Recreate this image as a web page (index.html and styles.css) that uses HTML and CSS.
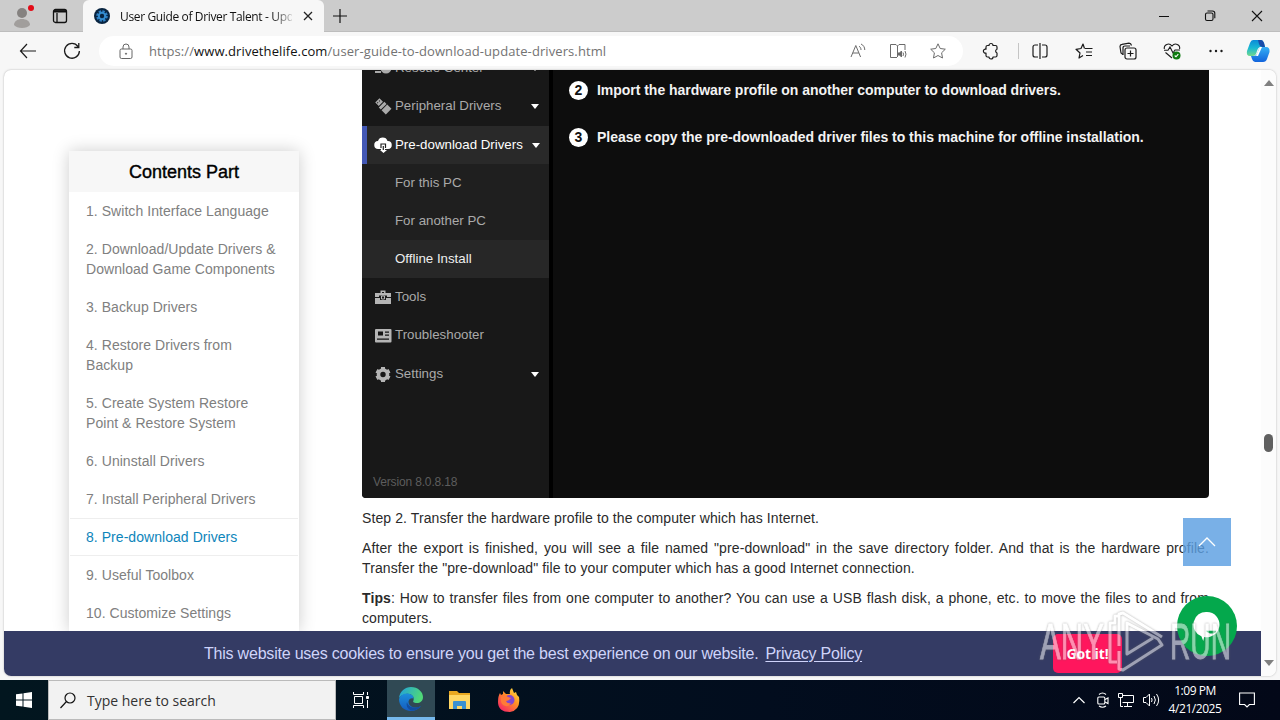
FILE: index.html
```html
<!DOCTYPE html>
<html lang="en">
<head>
<meta charset="UTF-8" />
<meta name="viewport" content="width=device-width, initial-scale=1" />
<title>User Guide of Driver Talent</title>
<link rel="stylesheet" href="styles.css">
</head>
<body>

<header class="tabbar">
  <svg class="profile" width="24" height="28" viewBox="0 0 24 28"><circle cx="12" cy="11" r="5" fill="#858280"/><path d="M4 23c0-8 16-8 16 0-3 4-13 4-16 0z" fill="#a19e9c"/><circle cx="21" cy="6" r="3" fill="#e30b17"/></svg>
  <svg class="tabs-icon" width="16" height="16" viewBox="0 0 16 16" fill="none" stroke="#111" stroke-width="1.3"><rect x="1.500" y="1.500" width="13" height="13" rx="2"/><path d="M2 3.300h12" stroke-width="2.400"/><path d="M5 5v9"/></svg>
  <div class="tab">
    <svg width="16" height="16" viewBox="0 0 16 16"><circle cx="8" cy="8" r="8" fill="#092541"/><circle cx="8" cy="8" r="4.5" fill="none" stroke="#2d7fc4" stroke-width="2.600" stroke-dasharray="2.300 1.200"/><circle cx="8" cy="8" r="3.200" fill="none" stroke="#348ccf" stroke-width="2"/></svg>
    <span class="tab-title">User Guide of Driver Talent - Upd</span>
    <svg width="10" height="10" viewBox="0 0 10 10" stroke="#222" stroke-width="1.300"><path d="M1 1l8 8M9 1L1 9"/></svg>
  </div>
  <svg class="newtab" width="14" height="14" viewBox="0 0 14 14" stroke="#111" stroke-width="1.200"><path d="M7 0v14M0 7h14"/></svg>
  <div class="window-buttons">
    <svg width="10" height="12" viewBox="0 0 10 12" stroke="#111"><path d="M0 6.500h10"/></svg>
    <svg width="12" height="12" viewBox="0 0 12 12" fill="none" stroke="#111" stroke-width="1.100"><rect x="1.500" y="3" width="7.500" height="7.500" rx="1.500"/><path d="M3.500 1h5q2.300 0 2.300 2.300v5"/></svg>
    <svg width="12" height="12" viewBox="0 0 12 12" stroke="#111" stroke-width="1.100"><path d="M1 1l10 10M11 1L1 11"/></svg>
  </div>
</header>

<nav class="toolbar">
  <svg class="back" width="18" height="16" viewBox="0 0 18 16" fill="none" stroke="#1b1b1b" stroke-width="1.200"><path d="M17 8H1.500M8 1L1.500 8 8 15"/></svg>
  <svg class="reload" width="18" height="18" viewBox="0 0 18 18" fill="none" stroke="#1b1b1b" stroke-width="1.300"><path d="M15 4.500A7.400 7.400 0 1 0 16.400 9M15.800 1v4.500h-4.500"/></svg>
  <div class="address">
    <svg class="lock" width="14" height="17" viewBox="0 0 14 17" fill="none" stroke="#666"><rect x="1" y="6" width="12" height="9.500" rx="1.500"/><path d="M4 6V4a3 3 0 0 1 6 0v2"/><circle cx="7" cy="10.700" r=".6" fill="#666"/></svg>
    <span class="url">https://<b>www.drivethelife.com</b>/user-guide-to-download-update-drivers.html</span>
    <svg width="16" height="16" viewBox="0 0 16 16" fill="none" stroke="#6b6b6b"><path d="M1 14L5.800 2.500 10.600 14M2.800 10h6M9 3.200c1.400.8 2 2 2 3.800M11 1c2.600 1.300 3.700 3.200 3.800 6"/></svg>
    <svg width="18" height="16" viewBox="0 0 18 16" fill="none" stroke="#6b6b6b"><path d="M8 14.500H1.500v-13H7L8.500 3 10 1.500h6V7M8.500 3v11"/><path d="M9 10h1.500l2-2v6l-2-2H9z" fill="#666"/><path d="M14 9.500q1 1.500 0 3.500M16 8q2 3 0 6.500"/></svg>
    <svg width="16" height="16" viewBox="0 0 16 16" fill="none" stroke="#6b6b6b" stroke-linejoin="round"><path d="M8 .8l2.200 4.700 5.100.7-3.700 3.600.9 5.200L8 12.500 3.500 15l.9-5.200L.7 6.200l5.100-.7z"/></svg>
  </div>
  <div class="tools">
    <svg width="18" height="18" viewBox="0 0 18 18" fill="none" stroke="#1b1b1b" stroke-width="1.200" stroke-linejoin="round"><path d="M5.500 3.500H7a2 2 0 0 1 4 0h2.500q1.500 0 1.500 1.500v2.200a2 2 0 0 0 0 3.800v2.500q0 1.500-1.500 1.500H11a2 2 0 0 1-4 0H5.500Q4 15 4 13.500V11a2 2 0 1 1 0-3.800V5q0-1.500 1.500-1.500z"/></svg>
    <i class="divider"></i>
    <svg width="18" height="18" viewBox="0 0 18 18" fill="none" stroke="#1b1b1b" stroke-width="1.200"><path d="M7 3H4a2 2 0 0 0-2 2v8q0 2 2 2h3M11 3h3a2 2 0 0 1 2 2v8q0 2-2 2h-3M9 1v16"/></svg>
    <svg width="18" height="18" viewBox="0 0 18 18" fill="none" stroke="#1b1b1b" stroke-width="1.200" stroke-linejoin="round"><path d="M9.500 6.500L8 2 6 6.500l-5 .8L5 11l-1 5 4-2.500M10 6.500h7.500M11 10h6M11 13.500h6"/></svg>
    <svg width="18" height="18" viewBox="0 0 18 18" fill="none" stroke="#1b1b1b" stroke-width="1.200"><path d="M4 12.500L2 11 1 4.500Q1 2.600 3 2.400L10 1.200q2 0 2.500 2.300"/><path d="M4 13V6q0-2 2-2h5"/><rect x="6" y="6" width="11" height="11" rx="2"/><path d="M11.500 8.500v6M8.500 11.500h6"/></svg>
    <svg width="18" height="18" viewBox="0 0 18 18" fill="none" stroke="#1b1b1b" stroke-width="1.100"><path d="M1.300 7C.6 2.500 6 .2 9 4c3-3.800 8.500-1.500 7.600 3M2.500 10.500L9 16M1 8.300h4L7 5l3 6 2-3h5"/><circle cx="13.500" cy="13.500" r="4" fill="#0f7b10" stroke="none"/><path d="M11.700 13.500l1.300 1.300 2.300-2.600" stroke="#fff"/></svg>
    <svg width="18" height="18" viewBox="0 0 18 18" fill="#1b1b1b"><circle cx="3.500" cy="9" r="1.200"/><circle cx="9" cy="9" r="1.200"/><circle cx="14.500" cy="9" r="1.200"/></svg>
  </div>
  <svg class="copilot" width="24" height="24" viewBox="0 0 24 24">
    <defs>
      <linearGradient id="cpA" x1="0" y1="0" x2="0" y2="1"><stop offset="0" stop-color="#0b8ad8"/><stop offset=".5" stop-color="#19b8d3"/><stop offset="1" stop-color="#72d98c"/></linearGradient>
      <linearGradient id="cpB" x1="0" y1="0" x2="0" y2="1"><stop offset="0" stop-color="#34b0f5"/><stop offset="1" stop-color="#1264dc"/></linearGradient>
    </defs>
    <path d="M7 1h8q2 0 3 3l1 4h-4q-3 0-4 4l-1 3q-1 2-3 2H4q-4 0-3-5L4 4q1-3 3-3z" fill="url(#cpA)"/>
    <path d="M12 1h3q2 0 3 3l1 4h-3q-2 0-3-3z" fill="#194baa"/>
    <path d="M17 8h3q4 0 3.500 5l-2.500 7q-1 3-4 3H9q-2 0-3-3l-1-3h3q2 0 3-2l2-5q1-2 4-2z" fill="url(#cpB)"/>
    <path d="M14 8h2l-4 9h-2z" fill="#fff"/>
  </svg>
</nav>

<div class="viewport">
  <main class="page">
    <aside class="contents">
      <h2>Contents Part</h2>
      <a>1. Switch Interface Language</a>
      <a>2. Download/Update Drivers &amp;<br>Download Game Components</a>
      <a>3. Backup Drivers</a>
      <a>4. Restore Drivers from<br>Backup</a>
      <a>5. Create System Restore<br>Point &amp; Restore System</a>
      <a>6. Uninstall Drivers</a>
      <a>7. Install Peripheral Drivers</a>
      <a class="active">8. Pre-download Drivers</a>
      <a>9. Useful Toolbox</a>
      <a>10. Customize Settings</a>
    </aside>

    <article class="guide">
      <section class="app">
        <div class="app-menu">
          <div class="item">
            <svg width="18" height="18" viewBox="0 0 18 18" fill="#aaa"><path d="M0 2h8v8H0zM1 12h6v2H1z"/><circle cx="12" cy="9" r="5.500"/></svg>
            <span>Rescue Center</span><i class="caret"></i>
          </div>
          <div class="item">
            <svg width="18" height="18" viewBox="0 0 18 18" fill="#aaa"><g transform="rotate(45 9 9)"><path d="M1 6h5v6H1zM7 5h3v8H7zM11 5h6v8h-6z"/><path d="M2.500 7.500h1v1h-1zM2.500 10h1v1h-1z" fill="#171717"/></g></svg>
            <span>Peripheral Drivers</span><i class="caret"></i>
          </div>
          <div class="item open">
            <svg width="18" height="18" viewBox="0 0 18 18" fill="#fff"><path d="M4.500 13a4 4 0 0 1-.5-8 5 5 0 0 1 9.500 0 4 4 0 0 1 .5 8H11v1h2l-3.500 3L6 14h1v-1z"/><path d="M7 12V8h4.500v4M9.300 10v4" fill="none" stroke="#222" stroke-width="1.200"/></svg>
            <span>Pre-download Drivers</span><i class="caret"></i>
          </div>
          <div class="sub">For this PC</div>
          <div class="sub">For another PC</div>
          <div class="sub current">Offline Install</div>
          <div class="item">
            <svg width="18" height="18" viewBox="0 0 18 18" fill="#b5b5b5"><path d="M6.500 5V2.500h5V5H17v4h-4V7.500H5V9H1V5zm1.500 0h2V4H8zM1 10h5v2h6v-2h5v6H1z"/><path d="M7.500 8h3v3h-3z" fill="none" stroke="#b5b5b5"/></svg>
            <span>Tools</span>
          </div>
          <div class="item">
            <svg width="18" height="18" viewBox="0 0 18 18"><rect x="1" y="3" width="16.500" height="13.500" rx="1" fill="#b5b5b5"/><path d="M4 5.500h5v4H4zM11 5.500h4v1.200h-4zM11 8.500h4v1.200h-4zM3 12.500h12v1.200H3z" fill="#151515"/></svg>
            <span>Troubleshooter</span>
          </div>
          <div class="item">
            <svg width="18" height="18" viewBox="0 0 18 18"><circle cx="9" cy="9.500" r="4.500" fill="none" stroke="#b5b5b5" stroke-width="3.600"/><path d="M9 2v3M9 14v3M2.500 5.700l2.600 1.500M12.900 11.800l2.600 1.500M2.500 13.300l2.600-1.500M12.900 7.200l2.600-1.500" stroke="#b5b5b5" stroke-width="4"/></svg>
            <span>Settings</span><i class="caret"></i>
          </div>
          <div class="version">Version 8.0.8.18</div>
        </div>
        <div class="app-body">
          <div class="step"><b class="num">2</b><span>Import the hardware profile on another computer to download drivers.</span></div>
          <div class="step"><b class="num">3</b><span>Please copy the pre-downloaded driver files to this machine for offline installation.</span></div>
        </div>
      </section>
      <p>Step 2. Transfer the hardware profile to the computer which has Internet.</p>
      <p>After the export is finished, you will see a file named "pre-download" in the save directory folder. And that is the hardware profile. Transfer the "pre-download" file to your computer which has a good Internet connection.</p>
      <p><b>Tips</b>: How to transfer files from one computer to another? You can use a USB flash disk, a phone, etc. to move the files to and from computers.</p>
    </article>

    <div class="to-top"><svg width="18" height="10" viewBox="0 0 18 10" fill="none" stroke="#fff" stroke-width="1.300"><path d="M1 9l8-8 8 8"/></svg></div>

    <div class="cookies">
      <span class="notice">This website uses cookies to ensure you get the best experience on our website.</span>
      <a class="policy">Privacy Policy</a>
      <button class="accept">Got it!</button>
    </div>

    <div class="chat"><svg width="30" height="32" viewBox="0 0 32 34"><path d="M16 2a13.500 13.500 0 1 1-3 26.700L12 33l-2-5A13.500 13.500 0 0 1 16 2z" fill="#fff"/><path d="M15 22h11q-1 3-5 3-4 0-6-3z" fill="#04a84c"/></svg></div>
  </main>
  <div class="scrollbar"><i class="up"></i><i class="thumb"></i><i class="down"></i></div>
</div>

<svg class="watermark" width="196" height="64" viewBox="0 0 196 64">
  <text x="3" y="48" textLength="64" lengthAdjust="spacingAndGlyphs">ANY</text>
  <g fill="none" stroke="#fff" stroke-linejoin="round">
    <path d="M81 5h-3v7h-5v39h7M82 35V3l4-1 39 24M82 40v18l4 1 39-25-4-6-31-16v31l26-16" stroke-width="3"/>
  </g>
  <text x="133" y="48" textLength="61" lengthAdjust="spacingAndGlyphs">RUN</text>
</svg>

<footer class="taskbar">
  <div class="start"><svg width="16" height="16" viewBox="0 0 16 16" fill="#fff"><path d="M0 2.300L6.500 1.400v6.100H0zM7.500 1.200L16 0v7.500H7.500zM0 8.500h6.500v6.100L0 13.700zM7.500 8.500H16V16l-8.500-1.200z"/></svg></div>
  <div class="search">
    <svg width="16" height="17" viewBox="0 0 16 17" fill="none" stroke="#111" stroke-width="1.200"><circle cx="10" cy="6" r="5"/><path d="M6.500 9.500L.5 16"/></svg>
    <span>Type here to search</span>
  </div>
  <div class="task"><svg width="16" height="16" viewBox="0 0 16 16" fill="none" stroke="#fff"><path d="M.5 0v2.500h10V0M1.500 4.500h8v7h-8zM.5 16v-2.500h10V16M14.500 0v3M14.500 8v8"/><path d="M13.500 4.500h2v2h-2z" fill="#fff"/></svg></div>
  <div class="task running">
    <svg width="24" height="24" viewBox="0 0 24 24">
      <defs>
        <linearGradient id="edA" x1="0" y1="0" x2="1" y2=".3"><stop offset="0" stop-color="#1f9fe0"/><stop offset="1" stop-color="#4fd878"/></linearGradient>
        <linearGradient id="edB" x1="0" y1="0" x2="0" y2="1"><stop offset="0" stop-color="#1c8fdc"/><stop offset="1" stop-color="#155bbd"/></linearGradient>
      </defs>
      <path d="M0 11C1 4 6 0 12 0c7 0 12 5 12 10 0 4-3 6-6 6-3.500 0-4.500-1.200-3.500-2.500C16 9 11 6 7 7q-5 1-7 4z" fill="url(#edA)"/>
      <path d="M0 12q2-5.500 8-5.500c4 0 7 2.500 6.500 5q-4-1-5 3c0 5 6 8 12.500 4.500Q18 24 12 24C5 24 0 19 0 12z" fill="url(#edB)"/>
      <path d="M8 15c1 5 7 7.500 14 4Q18 24 12 23.500 6 20 8 15z" fill="#134d9e"/>
    </svg>
  </div>
  <div class="task">
    <svg width="22" height="18" viewBox="0 0 22 18"><path d="M0 0h8l2 2h11v5H0z" fill="#e9a820"/><path d="M0 4h21v14H0z" fill="#ffd764"/><path d="M4 18v-7q0-1 1-1h11q1 0 1 1v7h-4v-3H8v3z" fill="#3b91cf"/></svg>
  </div>
  <div class="task">
    <svg width="24" height="24" viewBox="0 0 24 24">
      <defs><linearGradient id="ffA" x1="1" y1="0" x2=".2" y2="1"><stop offset="0" stop-color="#fff14b"/><stop offset=".45" stop-color="#ff9323"/><stop offset="1" stop-color="#f72466"/></linearGradient></defs>
      <path d="M3 5l1 2 2-1V3l3 3 4 0q-1-4 2-6l2 5 2-1 1 3 2 2q2 13-9 15Q1 24 1 14 1 8 3 5z" fill="url(#ffA)"/>
      <circle cx="12.500" cy="12" r="5" fill="#8047cf"/><path d="M4 9q4-3 7 0l3 1q-2 3-5 3 1 3 5 2-3 5-8 2-3-3-2-8z" fill="#ff7b37"/>
    </svg>
  </div>
  <div class="tray">
    <svg class="more" width="12" height="8" viewBox="0 0 12 8" fill="none" stroke="#fff" stroke-width="1.200"><path d="M.5 7L6 1.500 11.500 7"/></svg>
    <svg width="12" height="16" viewBox="0 0 12 16" fill="none" stroke="#fff" stroke-width="1.100"><rect x=".8" y="5" width="7" height="7" rx="1"/><path d="M8 7.500L11 6v5.500L8 10M2 2.500q3.500-3 7 0M2 14q3.500 2.500 7 0"/></svg>
    <svg width="16" height="14" viewBox="0 0 16 14" fill="none" stroke="#fff"><path d="M5 2.500h10.500v7H4.500M9.500 10v3M6 13.500h8M.5 .5h4v4h-4zM2.500 5v8.500H5"/></svg>
    <svg width="17" height="14" viewBox="0 0 17 14" fill="none" stroke="#fff"><path d="M.5 4.500H3L6.500 1v12L3 9.500H.5zM8.500 5q1.200 2 0 4M11 3q2.700 4 0 8M13.500 1q4.300 6 0 12"/></svg>
  </div>
  <div class="clock"><span>1:09 PM</span><span>4/21/2025</span></div>
  <svg class="bell" width="16" height="16" viewBox="0 0 16 16" fill="none" stroke="#fff" stroke-width="1.100"><path d="M.6 1h14.800v11.500h-5L8 15l-2.400-2.500h-5z"/></svg>
</footer>

</body>
</html>
```
FILE: styles.css
```css
* { box-sizing: border-box; }
body {
  margin: 0; width: 1280px; height: 720px; overflow: hidden; position: relative;
  display: flex; flex-direction: column; background: #f7f7f7;
  font-family: "Liberation Sans", Arial, sans-serif;
}
svg { display: block; flex: none; }

/* browser window */
.tabbar { height: 32px; flex: none; display: flex; align-items: center; background: #ccc; border-bottom: 1px solid #bdbdbd; }
.profile { margin-left: 10px; }
.tabs-icon { margin-left: 18px; }
.tab {
  width: 241px; height: 32px; margin-left: 15px; padding: 0 11px;
  display: flex; align-items: center; background: #f7f7f7; border-radius: 6px 6px 0 0; align-self: flex-start;
}
.tab-title {
  width: 172px; margin: 0 11px 0 10px; overflow: hidden; white-space: nowrap;
  font: 12px "Open Sans", sans-serif; letter-spacing: -0.36px; color: #111;
  -webkit-mask-image: linear-gradient(to right, #000 88%, rgba(0,0,0,.2));
}
.newtab { margin-left: 9px; }
.window-buttons { margin-left: auto; margin-right: 17px; display: flex; gap: 35px; }
.toolbar { height: 38px; flex: none; display: flex; align-items: center; }
.back { margin-left: 19px; }
.reload { margin-left: 26px; }
.address {
  width: 864px; height: 30px; margin-left: 18px; padding: 0 17px 0 20px; border-radius: 15px; background: #fff;
  display: flex; align-items: center; gap: 23px;
}
.url { flex: 1; margin-left: -7px; font: 13px "Open Sans", sans-serif; color: #737373; white-space: nowrap; letter-spacing: 0.09px; }
.url b { font-weight: 400; color: #111; }
.tools { margin-left: 19px; display: flex; align-items: center; gap: 26px; }
.divider { width: 1px; height: 16px; background: #c5c5c5; margin: 0 -14px 0 -8px; }
.copilot { margin-left: 21px; }

.viewport {
  height: 606px; flex: none; margin: 0 4px; display: flex; background: #fff;
  border-radius: 7px; overflow: hidden; box-shadow: 0 0 2px #aaa;
}
.page { width: 1257px; height: 606px; position: relative; display: flex; align-items: flex-start; overflow: hidden; }
.scrollbar { flex: 1; display: flex; flex-direction: column; align-items: center; background: #fcfcfc; padding: 10px 0; }
.up, .down { border: 5px solid transparent; border-top: 0; border-bottom: 6px solid #808080; }
.down { border-bottom: 0; border-top: 6px solid #808080; margin-top: auto; }
.thumb { width: 9px; height: 18px; border-radius: 5px; background: #606060; margin-top: 348px; }

/* table of contents */
.contents { width: 230px; margin: 81px 0 0 65px; flex: none; box-shadow: 0 0 16px rgba(0,0,0,.2); background: #fff; }
.contents h2 { height: 41px; margin: 0; text-align: center; font: 18px/42px "Liberation Sans", sans-serif; -webkit-text-stroke: .4px #000; background: #f7f7f7; color: #000; }
.contents a { display: block; height: 38px; margin: 0 1px; padding: 8px 16px; border: 1px solid transparent; border-width: 1px 0; font-size: 14px; line-height: 20px; letter-spacing: .05px; color: #808080; white-space: nowrap; }
.contents a:has(br) { height: 58px; }
.contents a.active { color: #0d85bb; border-color: #eee; }

.guide { width: 847px; margin-left: 63px; font-size: 14px; line-height: 20px; color: #2a2a2a; letter-spacing: .1px; }
.guide p { margin: 0 0 10px; text-align: justify; }
.app { height: 428px; margin-bottom: 10px; display: flex; overflow: hidden; border-radius: 0 0 4px 4px; background: #0d0d0d; letter-spacing: 0; }
.app-menu { width: 187px; flex: none; margin-top: -21px; display: flex; flex-direction: column; background: #181818; color: #aaa; font-size: 13.3px; }
.item { height: 38.5px; flex: none; padding: 0 10px 1px 12px; display: flex; align-items: center; gap: 3px; white-space: nowrap; }
.open { height: 38px; padding: 0 9px 0 7px; color: #fff; background: #292929; border-left: 5px solid #4358b5; }
.caret { border: 4px solid transparent; border-top: 5px solid #fff; border-bottom: 0; margin: 1px 0 0 auto; }
.sub { height: 38px; flex: none; padding-left: 33px; line-height: 38px; background: #1f1f1f; }
.current { color: #eee; background: #272727; }
.version { margin: auto 0 6px 11px; font-size: 12px; letter-spacing: -.15px; color: #5d5d5d; }
.app-body { flex: 1; border-left: 4px solid #000; padding: 10px 0 0 16px; display: flex; flex-direction: column; gap: 27px; color: #f3f3f3; font-weight: bold; }
.step { display: flex; align-items: center; gap: 9px; height: 20px; letter-spacing: -.03px; }
.num { width: 19px; height: 19px; border-radius: 50%; background: #fff; color: #111; text-align: center; line-height: 19px; }

.to-top { position: absolute; left: 1179px; top: 448px; width: 48px; height: 48px; display: flex; align-items: center; justify-content: center; background: rgba(92,159,226,.82); }
.cookies { position: absolute; left: 0; right: 0; bottom: 0; height: 45px; padding-left: 200px; display: flex; align-items: center; background: #343b64; color: #cfd4fa; font-size: 16px; letter-spacing: -.21px; white-space: nowrap; }
.policy { margin-left: 7px; text-decoration: underline; text-underline-offset: 2px; }
.accept { position: absolute; left: 1049px; top: 3px; width: 69px; height: 39px; padding: 0; border: 0; border-radius: 5px; background: #ff165d; color: #fff; font: bold 14px "Open Sans", sans-serif; letter-spacing: -.1px; }
.chat { position: absolute; left: 1173px; top: 526px; width: 60px; height: 60px; border-radius: 50%; display: flex; align-items: center; justify-content: center; background: #04a84c; }
.watermark { position: absolute; left: 1037px; top: 611px; opacity: .52; filter: drop-shadow(0 0 1px #666); }
.watermark text { font: 50px "Liberation Sans", sans-serif; fill: #fff; stroke: #fff; stroke-width: .8px; }

/* windows taskbar */
.taskbar { height: 40px; flex: none; margin-top: auto; display: flex; align-items: center; background: linear-gradient(90deg, #02161f, #020d1e 60%, #030818); color: #fff; font-family: "Open Sans", sans-serif; }
.start { width: 48px; padding-left: 16px; }
.search { width: 288px; height: 40px; border: 1px solid #bbb; background: #f2f2f2; color: #333; font-size: 14px; display: flex; align-items: center; gap: 11px; padding-left: 11px; }
.task { width: 49px; height: 40px; display: flex; align-items: center; justify-content: center; }
.running { width: 48px; margin-left: 2px; background: #304954; border-bottom: 3px solid #76b9ed; }
.tray { margin-left: auto; display: flex; align-items: center; gap: 9px; }
.more { margin-right: 3px; }
.clock { width: 62px; margin-left: 4px; display: flex; flex-direction: column; align-items: center; font-size: 12px; line-height: 18px; letter-spacing: -.45px; }
.bell { margin: 0 25px 0 13px; }
```
